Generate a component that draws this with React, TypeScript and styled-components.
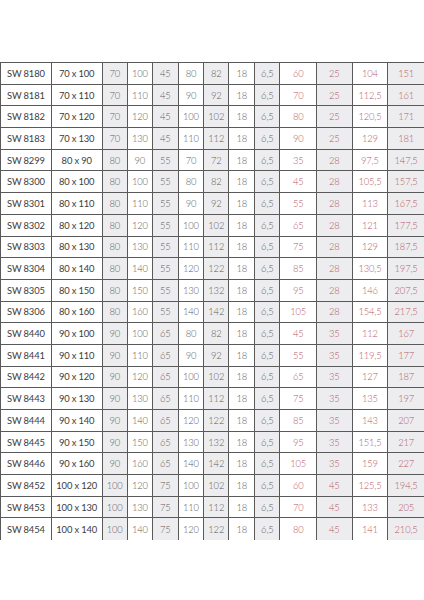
import styled, { createGlobalStyle } from 'styled-components';

const GlobalStyle = createGlobalStyle`
  html, body {
    margin: 0;
    padding: 0;
    background: #fff;
  }
  body {
    font-family: Lato, "Open Sans", sans-serif;
  }
`;

type Tone = 'dark' | 'mid' | 'red';

// one entry per column: width, shaded background, text tone
const columns: { width: number; shade: boolean; tone: Tone }[] = [
  { width: 50.7, shade: false, tone: 'dark' },
  { width: 51, shade: false, tone: 'dark' },
  { width: 25, shade: true, tone: 'mid' },
  { width: 25.3, shade: false, tone: 'mid' },
  { width: 25.7, shade: true, tone: 'mid' },
  { width: 25.6, shade: false, tone: 'mid' },
  { width: 25, shade: true, tone: 'mid' },
  { width: 26, shade: false, tone: 'mid' },
  { width: 25.2, shade: true, tone: 'mid' },
  { width: 36.5, shade: false, tone: 'red' },
  { width: 35.7, shade: true, tone: 'red' },
  { width: 35.6, shade: false, tone: 'red' },
  { width: 36.7, shade: true, tone: 'red' },
];

const rows: string[][] = [
  ['SW 8180', '70 x 100', '70', '100', '45', '80', '82', '18', '6,5', '60', '25', '104', '151'],
  ['SW 8181', '70 x 110', '70', '110', '45', '90', '92', '18', '6,5', '70', '25', '112,5', '161'],
  ['SW 8182', '70 x 120', '70', '120', '45', '100', '102', '18', '6,5', '80', '25', '120,5', '171'],
  ['SW 8183', '70 x 130', '70', '130', '45', '110', '112', '18', '6,5', '90', '25', '129', '181'],
  ['SW 8299', '80 x 90', '80', '90', '55', '70', '72', '18', '6,5', '35', '28', '97,5', '147,5'],
  ['SW 8300', '80 x 100', '80', '100', '55', '80', '82', '18', '6,5', '45', '28', '105,5', '157,5'],
  ['SW 8301', '80 x 110', '80', '110', '55', '90', '92', '18', '6,5', '55', '28', '113', '167,5'],
  ['SW 8302', '80 x 120', '80', '120', '55', '100', '102', '18', '6,5', '65', '28', '121', '177,5'],
  ['SW 8303', '80 x 130', '80', '130', '55', '110', '112', '18', '6,5', '75', '28', '129', '187,5'],
  ['SW 8304', '80 x 140', '80', '140', '55', '120', '122', '18', '6,5', '85', '28', '130,5', '197,5'],
  ['SW 8305', '80 x 150', '80', '150', '55', '130', '132', '18', '6,5', '95', '28', '146', '207,5'],
  ['SW 8306', '80 x 160', '80', '160', '55', '140', '142', '18', '6,5', '105', '28', '154,5', '217,5'],
  ['SW 8440', '90 x 100', '90', '100', '65', '80', '82', '18', '6,5', '45', '35', '112', '167'],
  ['SW 8441', '90 x 110', '90', '110', '65', '90', '92', '18', '6,5', '55', '35', '119,5', '177'],
  ['SW 8442', '90 x 120', '90', '120', '65', '100', '102', '18', '6,5', '65', '35', '127', '187'],
  ['SW 8443', '90 x 130', '90', '130', '65', '110', '112', '18', '6,5', '75', '35', '135', '197'],
  ['SW 8444', '90 x 140', '90', '140', '65', '120', '122', '18', '6,5', '85', '35', '143', '207'],
  ['SW 8445', '90 x 150', '90', '150', '65', '130', '132', '18', '6,5', '95', '35', '151,5', '217'],
  ['SW 8446', '90 x 160', '90', '160', '65', '140', '142', '18', '6,5', '105', '35', '159', '227'],
  ['SW 8452', '100 x 120', '100', '120', '75', '100', '102', '18', '6,5', '60', '45', '125,5', '194,5'],
  ['SW 8453', '100 x 130', '100', '130', '75', '110', '112', '18', '6,5', '70', '45', '133', '205'],
  ['SW 8454', '100 x 140', '100', '140', '75', '120', '122', '18', '6,5', '80', '45', '141', '210,5'],
];

const toneColor: Record<Tone, string> = {
  dark: '#3c3c3c',
  mid: '#5e5e5e',
  red: '#b65a69',
};

const Page = styled.div`
  padding-top: 62px;
  width: 424px;
  overflow: hidden;
`;

const Table = styled.table`
  border-collapse: collapse;
  table-layout: fixed;
  width: 425px;
  border-left: 1.5px solid #4a4a4a;
`;

const Row = styled.tr`
  height: 21.7px;

  &:last-child td {
    border-bottom: none;
  }
`;

const Cell = styled.td<{ $shade: boolean; $tone: Tone }>`
  padding: 0;
  text-align: center;
  vertical-align: middle;
  font-size: 9.4px;
  letter-spacing: -0.15px;
  font-weight: ${(p) => (p.$tone === 'dark' ? 400 : 300)};
  color: ${(p) => toneColor[p.$tone]};
  background: ${(p) => (p.$shade ? '#ededef' : '#ffffff')};
  border: 1.5px solid #5a5a5a;
  white-space: nowrap;
  overflow: hidden;
`;

export default function App() {
  return (
    <Page>
      <GlobalStyle />
      <Table>
        <colgroup>
          {columns.map((c, i) => (
            <col key={i} style={{ width: c.width }} />
          ))}
        </colgroup>
        <tbody>
          {rows.map((r) => (
            <Row key={r[0]}>
              {r.map((v, i) => (
                <Cell key={i} $shade={columns[i].shade} $tone={columns[i].tone}>
                  {v}
                </Cell>
              ))}
            </Row>
          ))}
        </tbody>
      </Table>
    </Page>
  );
}
